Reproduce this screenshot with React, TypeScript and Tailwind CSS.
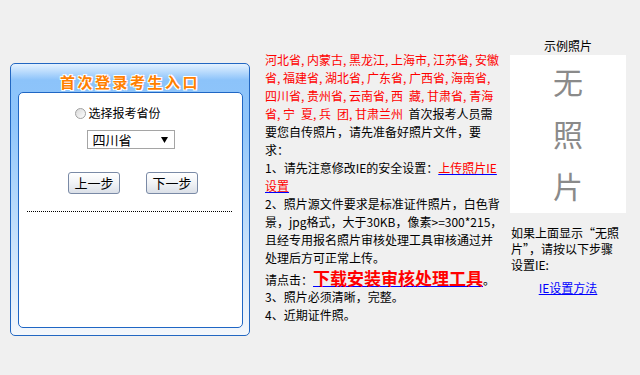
import React from "react";

const Line = ({ children, className = "" }: { children: React.ReactNode; className?: string }) => (
  <div className={"h-[18px] leading-[18px] whitespace-nowrap " + className}>{children}</div>
);

function LoginBox() {
  return (
    <div className="ml-[10px] mt-[63px] w-[240px] h-[273px] rounded-[5px] border border-[#2267c2] bg-[linear-gradient(to_bottom,#e4f2ff,#8cc3fa_16px,#90c6fb_60px,#f4f7fb)] flex flex-col">
      <div className="h-[28px] pt-[9px] leading-[18px] text-center text-[15px] font-bold tracking-[2.5px] text-[#ff8000] [text-shadow:0_0_2px_#fff,1px_1px_0_#fff,-1px_-1px_0_#fff,1px_-1px_0_#fff,-1px_1px_0_#fff]">
        首次登录考生入口
      </div>
      <div className="ml-[7px] mr-[6px] mb-[7px] flex-1 rounded-[5px] border border-[#1f66c4] bg-white flex flex-col">
        {/* 省份选择 */}
        <label className="mt-[12px] h-[16px] flex items-center justify-center pr-[25px] text-[12px] leading-[16px]">
          <span className="mr-[2px] w-[11px] h-[11px] rounded-full border border-[#a0a0a0] bg-[linear-gradient(135deg,#d8d8d8,#ffffff)]" />
          选择报考省份
        </label>
        <div className="mt-[9px] mx-auto w-[88px] h-[19px] border border-[#a5a5a5] bg-white flex items-center justify-between pl-[5px] pr-[6px] text-[13px] leading-[17px]">
          <span>四川省</span>
          <svg width="7" height="6" viewBox="0 0 7 6">
            <path d="M0 0 L7 0 L3.5 6 Z" fill="#000" />
          </svg>
        </div>
        <div className="mt-[23px] flex justify-center gap-[26px] pl-[5px]">
          <button className="w-[52px] h-[22px] rounded-[3px] border border-[#7a8aa6] bg-[linear-gradient(to_bottom,#ffffff,#f1f3f6_50%,#dbe0e8)] text-[13px] leading-[20px]">
            上一步
          </button>
          <button className="w-[52px] h-[22px] rounded-[3px] border border-[#7a8aa6] bg-[linear-gradient(to_bottom,#ffffff,#f1f3f6_50%,#dbe0e8)] text-[13px] leading-[20px]">
            下一步
          </button>
        </div>
        <div className="mt-[17px] ml-[8px] w-[205px] border-t border-dotted border-black" />
      </div>
    </div>
  );
}

function Notice() {
  return (
    <div className="ml-[15px] mt-[51px] w-[245px] text-[12px]">
      <Line className="text-[#ff0000]">河北省, 内蒙古, 黑龙江, 上海市, 江苏省, 安徽</Line>
      <Line className="text-[#ff0000]">省, 福建省, 湖北省, 广东省, 广西省, 海南省,</Line>
      <Line className="text-[#ff0000]">四川省, 贵州省, 云南省, 西{"\u2002"}藏, 甘肃省, 青海</Line>
      <Line>
        <span className="text-[#ff0000]">省, 宁{"\u2002"}夏, 兵{"\u2002"}团, 甘肃兰州</span>&nbsp;&nbsp;首次报考人员需
      </Line>
      <Line>要您自传照片，请先准备好照片文件，要</Line>
      <Line>求：</Line>
      <Line>
        1、请先注意修改IE的安全设置：
        <a href="#" className="underline decoration-[#0000ff]">
          <span className="text-[#ff0000]">上传照片IE</span>
        </a>
      </Line>
      <Line>
        <a href="#" className="underline decoration-[#0000ff]">
          <span className="text-[#ff0000]">设置</span>
        </a>
      </Line>
      <Line>2、照片源文件要求是标准证件照片，白色背</Line>
      <Line>景，jpg格式，大于30KB，像素&gt;=300*215，</Line>
      <Line>且经专用报名照片审核处理工具审核通过并</Line>
      <Line>处理后方可正常上传。</Line>
      <div className="h-[21px] leading-[21px] whitespace-nowrap">
        请点击：
        <a href="#" className="underline decoration-[#0000ff]">
          <span className="text-[17px] font-bold text-[#ff0000]">下载安装审核处理工具</span>
        </a>
        。
      </div>
      <Line>3、照片必须清晰，完整。</Line>
      <Line>4、近期证件照。</Line>
    </div>
  );
}

function SamplePhoto() {
  return (
    <div className="mt-[37px] w-[116px] text-[12px]">
      <div className="text-center leading-[17px]">示例照片</div>
      <div className="mt-[1px] h-[158px] bg-white flex flex-col items-center text-[30px] leading-[52px] text-[#8a8a8a]">
        <span>无</span>
        <span>照</span>
        <span>片</span>
      </div>
      <div className="mt-[12px] pl-[1px] leading-[16px]">
        <div>如果上面显示“无照</div>
        <div>片”，请按以下步骤</div>
        <div>设置IE:</div>
      </div>
      <div className="mt-[7px] text-center leading-[16px]">
        <a href="#" className="text-[#0000ff] underline">IE设置方法</a>
      </div>
    </div>
  );
}

export default function App() {
  return (
    <div className="w-full min-h-screen bg-[#f0f0f0] flex items-start font-['Noto_Sans_CJK_SC',sans-serif] text-black">
      <LoginBox />
      <Notice />
      <SamplePhoto />
    </div>
  );
}
